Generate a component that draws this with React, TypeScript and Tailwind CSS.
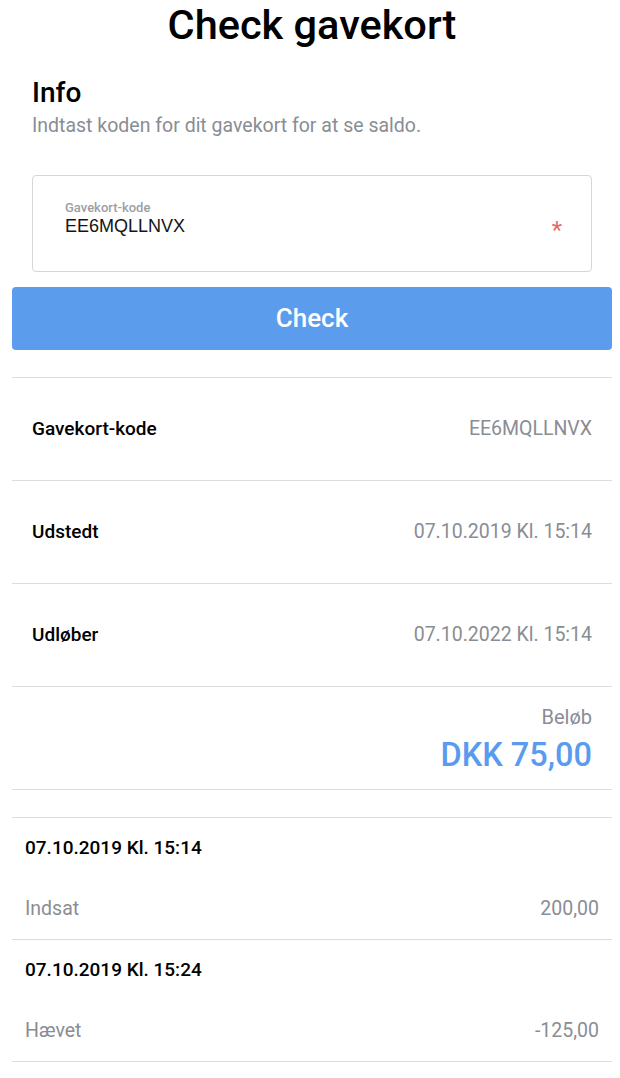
const rows = [
  { label: "Gavekort-kode", value: "EE6MQLLNVX" },
  { label: "Udstedt", value: "07.10.2019 Kl. 15:14" },
  { label: "Udløber", value: "07.10.2022 Kl. 15:14" },
];

const transactions = [
  { date: "07.10.2019 Kl. 15:14", type: "Indsat", amount: "200,00" },
  { date: "07.10.2019 Kl. 15:24", type: "Hævet", amount: "-125,00" },
];

export default function App() {
  return (
    <div className="min-h-screen bg-white pl-[12px] pr-[8px] font-['Roboto',sans-serif] text-black">
      <h1 className="pt-[1px] text-center text-[41.5px] font-medium leading-[48px]">
        Check gavekort
      </h1>

      <div className="px-[20px] pt-[27px]">
        <h2 className="text-[28px] font-medium leading-[34px]">Info</h2>
        <p className="mt-[2px] text-[19.5px] leading-[28px] text-[#898d94]">
          Indtast koden for dit gavekort for at se saldo.
        </p>

        <div className="mt-[35px] h-[97px] rounded-[4px] border border-[#d4d6da] px-[32px]">
          <div className="flex items-start justify-between pt-[24px]">
            <div>
              <div className="text-[13px] font-medium leading-[16px] text-[#9b9ea3]">
                Gavekort-kode
              </div>
              <div className="font-['Liberation_Sans',sans-serif] text-[18px] leading-[20px] text-[#141414]">
                EE6MQLLNVX
              </div>
            </div>
            <span className="mt-[18px] mr-[-3px] text-[24px] leading-none text-[#e46a6a]">*</span>
          </div>
        </div>
      </div>

      <button className="mt-[15px] flex h-[63px] w-full items-center justify-center rounded-[4px] bg-[#5c9cec] text-[26px] font-medium text-white">
        Check
      </button>

      <div className="mt-[27px] border-t border-[#d9dce0]">
        {rows.map((r) => (
          <div
            key={r.label}
            className="flex h-[103px] items-center justify-between border-b border-[#d9dce0] px-[20px]"
          >
            <span className="text-[19px] font-medium">{r.label}</span>
            <span className="text-[19.5px] text-[#898d94]">{r.value}</span>
          </div>
        ))}
        <div className="flex h-[103px] flex-col items-end border-b border-[#d9dce0] px-[20px] pt-[18px]">
          <span className="text-[20px] leading-[24px] text-[#898d94]">Beløb</span>
          <span className="mt-[7px] text-[32.5px] font-medium leading-[38px] text-[#5a9bef]">
            DKK 75,00
          </span>
        </div>
      </div>

      <div className="mt-[27px] border-t border-[#d9dce0]">
        {transactions.map((t) => (
          <div key={t.date} className="border-b border-[#d9dce0] px-[13px]">
            <div className="flex h-[61px] items-center text-[19px] font-medium">{t.date}</div>
            <div className="flex h-[60px] items-center justify-between text-[19.5px] text-[#898d94]">
              <span>{t.type}</span>
              <span>{t.amount}</span>
            </div>
          </div>
        ))}
      </div>
    </div>
  );
}
